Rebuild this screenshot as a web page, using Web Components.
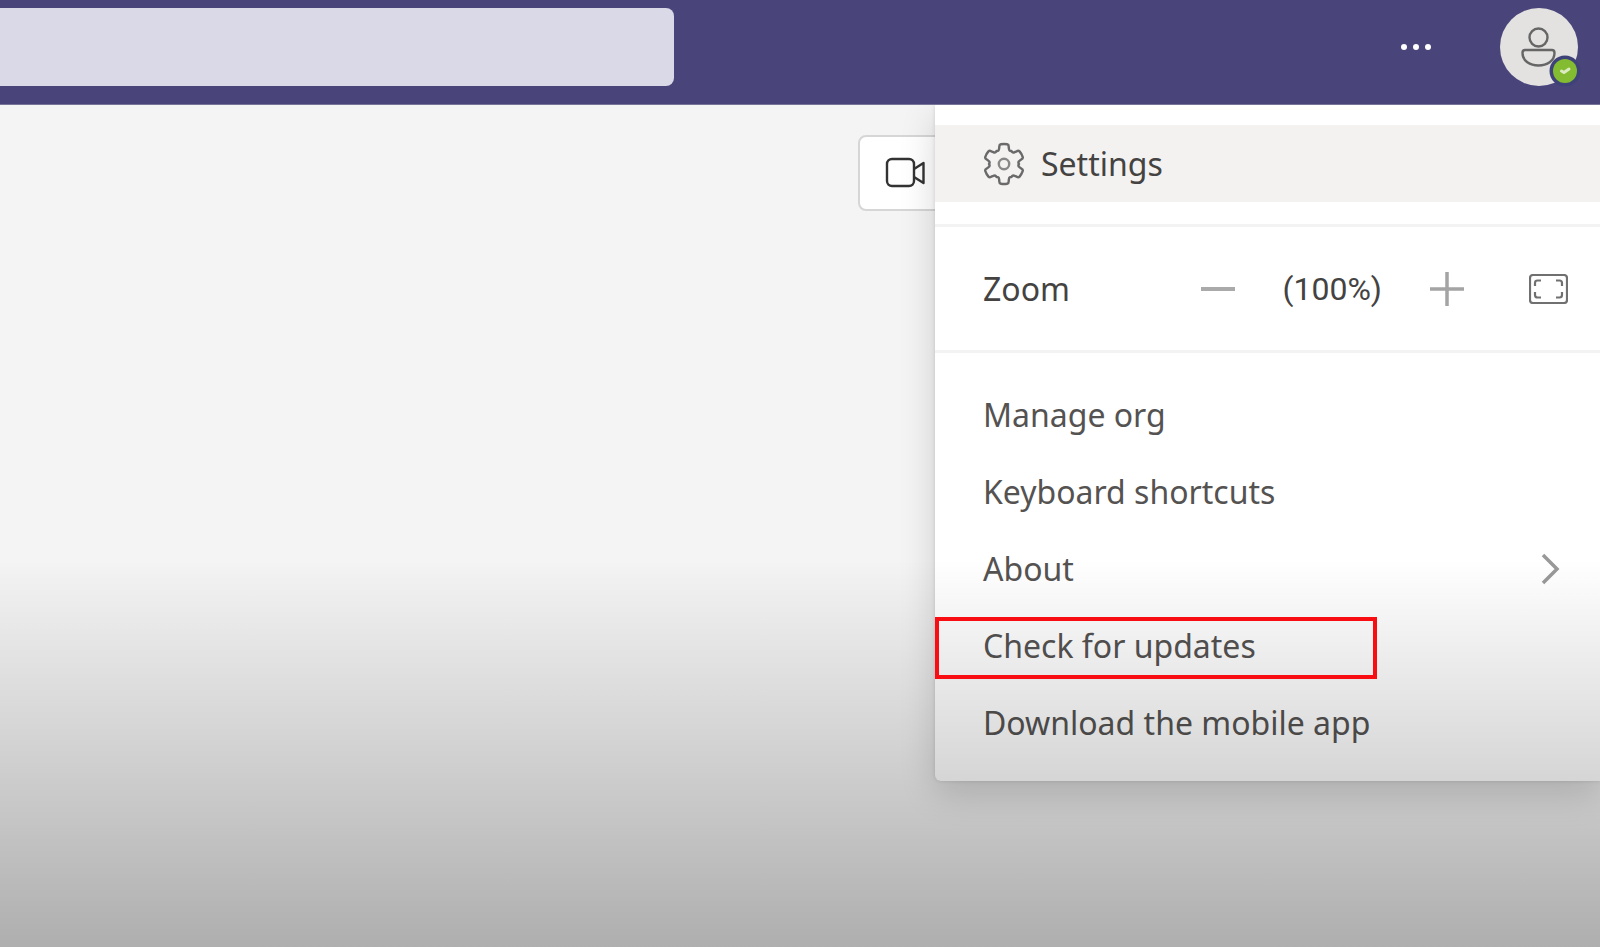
<!DOCTYPE html>
<html lang="en">
<head>
<meta charset="utf-8">
<meta name="viewport" content="width=device-width, initial-scale=1">
<title>Teams</title>
<style>
  html, body { margin: 0; }
  body { font-family: "Noto Sans", "Open Sans", sans-serif; color: #555352; }
</style>
</head>
<body>
<teams-app></teams-app>
<script>
const reset = `
  *, ::before, ::after { box-sizing: border-box; }
  :host { box-sizing: border-box; }
  :host::after { box-sizing: border-box; }
  button { font: inherit; color: inherit; background: none; border: 0; padding: 0; margin: 0; cursor: pointer; text-align: left; }
  svg { display: block; fill: none; }
`;
const define = (name, html) => customElements.define(name, class extends HTMLElement {
  constructor() {
    super();
    this.attachShadow({ mode: 'open' }).innerHTML = html;
  }
});

define('user-avatar', `
  <style>${reset}
    :host { display: block; position: relative; }
    button { display: grid; place-items: center; width: 78px; height: 78px; border-radius: 50%; background: #e3e2e1; }
    .status { position: absolute; right: -3px; bottom: -1px; }
  </style>
  <button aria-label="Profile">
    <svg width="40" height="44" viewBox="0 0 40 44" stroke="#666" stroke-width="2.400">
      <circle cx="19.500" cy="12.500" r="9"/>
      <path d="M6 25H33Q35.500 25 35.500 28C35.500 36 28 40.500 19.500 40.500S3.500 36 3.500 28Q3.500 25 6 25Z"/>
    </svg>
  </button>
  <svg class="status" width="32" height="32" viewBox="0 0 32 32">
    <circle cx="16" cy="16" r="15.500" fill="#3f4279"/>
    <circle cx="16" cy="16" r="12" fill="#83bb31"/>
    <path d="M12.500 16l2.500 1.500 5-3.500" stroke="#dcecc0" stroke-width="3" stroke-linecap="round" stroke-linejoin="round"/>
  </svg>
`);

define('title-bar', `
  <style>${reset}
    :host { display: flex; align-items: center; height: 105px; padding: 0 22px 10px 0; background: #49457b; border-bottom: 1px solid #77749b; position: relative; z-index: 1; }
    input { flex: 1; min-width: 0; height: 78px; border: 0; border-radius: 0 8px 8px 0; background: #dad9e7; font: inherit; font-size: 32px; padding: 0 24px; outline: 0; }
    .actions { display: flex; align-items: center; gap: 66px; margin-left: 724px; }
    .dots { fill: #fff; }
  </style>
  <input type="search" aria-label="Search">
  <div class="actions">
    <button aria-label="Settings and more">
      <svg class="dots" width="36" height="36" viewBox="0 0 36 36"><circle cx="6" cy="18" r="3"/><circle cx="18" cy="18" r="3"/><circle cx="30" cy="18" r="3"/></svg>
    </button>
    <user-avatar></user-avatar>
  </div>
`);

customElements.define('gear-icon', class extends HTMLElement {
  constructor() {
    super();
    const point = (radius, degrees) => {
      const a = degrees * Math.PI / 180;
      return (22 + radius * Math.sin(a)).toFixed(2) + ' ' + (22 - radius * Math.cos(a)).toFixed(2);
    };
    let d = '';
    for (let t = 0; t < 360; t += 60) {
      d += (t ? 'L' : 'M') + point(18, t - 15) + 'Q' + point(20, t - 14) + ' ' + point(20, t - 9)
        + 'Q' + point(20.4, t) + ' ' + point(20, t + 9)
        + 'Q' + point(20, t + 14) + ' ' + point(18, t + 15)
        + 'L' + point(16, t + 18) + 'Q' + point(13.6, t + 22) + ' ' + point(15, t + 30)
        + 'Q' + point(13.6, t + 38) + ' ' + point(16, t + 42);
    }
    this.attachShadow({ mode: 'open' }).innerHTML = `
      <style>${reset} :host { display: block; }</style>
      <svg width="44" height="44" viewBox="0 0 44 44" stroke="#6a6a6a" stroke-width="2.400" stroke-linejoin="round">
        <path d="${d}Z"/><circle cx="22" cy="22" r="5.200" stroke="#888"/>
      </svg>`;
  }
});

define('menu-item', `
  <style>${reset}
    :host { display: block; position: relative; }
    button { display: flex; align-items: center; width: 100%; height: 77px; padding: 0 40px 0 48px; }
    .label { flex: 1; }
    :host([active]) button { background: #f3f2f1; color: #444342; }
    :host([marked])::after { content: ""; position: absolute; z-index: 3; left: 0; top: 10px; width: 442px; height: 62px; border: 4px solid #f80d12; pointer-events: none; }
    ::slotted([slot=icon]) { margin: 0 15px 0 -1px; }
  </style>
  <button role="menuitem"><slot name="icon"></slot><span class="label"><slot></slot></span><slot name="end"></slot></button>
`);

define('zoom-control', `
  <style>${reset}
    :host { display: flex; align-items: center; height: 123px; padding: 0 32px 0 48px; color: #444342; }
    .label { flex: 1; }
    .value { margin: 0 48px; font-family: Roboto, sans-serif; }
    .full { margin-left: 65px; }
  </style>
  <span class="label">Zoom</span>
  <button aria-label="Zoom out"><svg width="34" height="34" viewBox="0 0 34 34" stroke="#aaa" stroke-width="4"><path d="M0 17H34"/></svg></button>
  <span class="value">(100%)</span>
  <button aria-label="Zoom in"><svg width="34" height="34" viewBox="0 0 34 34" stroke="#a4a4a4" stroke-width="3.500"><path d="M0 17H34M17 0V34"/></svg></button>
  <button class="full" aria-label="Full screen">
    <svg width="39" height="30" viewBox="0 0 39 30" stroke="#707070" stroke-width="2.200">
      <rect x="1" y="1" width="37" height="28" rx="3"/>
      <path d="M6 12V9Q6 6.500 8.500 6.500H12M27 6.500H30.500Q33 6.500 33 9V12M33 18V21Q33 23.500 30.500 23.500H27M12 23.500H8.500Q6 23.500 6 21V18"/>
    </svg>
  </button>
`);

define('settings-menu', `
  <style>${reset}
    :host { display: block; padding: 20px 0; background: #fff; border-radius: 0 0 0 6px; font-size: 32px; line-height: 44px; box-shadow: 0 12px 36px rgba(0,0,0,.16), 0 0 4px rgba(0,0,0,.12); }
    hr { margin: 0; border: 0; height: 3px; background: #f3f3f3; }
    hr.spaced { margin-top: 22px; }
    .links { padding-top: 23px; }
  </style>
  <menu-item active><gear-icon slot="icon"></gear-icon>Settings</menu-item>
  <hr class="spaced">
  <zoom-control></zoom-control>
  <hr>
  <div class="links">
    <menu-item>Manage org</menu-item>
    <menu-item>Keyboard shortcuts</menu-item>
    <menu-item>About
      <svg slot="end" width="20" height="32" viewBox="0 0 20 32" fill="none" stroke="#999" stroke-width="3.500"><path d="M3 2L17 16L3 30"/></svg>
    </menu-item>
    <menu-item marked>Check for updates</menu-item>
    <menu-item>Download the mobile app</menu-item>
  </div>
`);

define('meet-button', `
  <style>${reset}
    :host { display: block; }
    button { display: flex; align-items: center; width: 140px; height: 76px; padding-left: 25px; background: #fff; border: 2px solid #d6d6d6; border-radius: 8px; }
  </style>
  <button aria-label="Meet now">
    <svg width="42" height="32" viewBox="0 0 42 32" stroke="#333" stroke-width="2.400" stroke-linejoin="round">
      <rect x="2" y="2" width="27" height="27" rx="5"/><path d="M29 12L38.500 6V26L29 20"/>
    </svg>
  </button>
`);

define('teams-app', `
  <style>${reset}
    :host { display: flex; flex-direction: column; min-height: 100vh; background: #f4f4f4; position: relative; overflow: hidden; }
    main { flex: 1; position: relative; }
    .toolbar { display: flex; justify-content: flex-end; padding: 30px 602px 0 0; }
    settings-menu { position: absolute; top: 0; right: 0; width: 665px; }
    .shade { position: absolute; z-index: 2; inset: 0; pointer-events: none; background: linear-gradient(transparent 59%, rgba(0,0,0,.285)); }
  </style>
  <title-bar></title-bar>
  <main>
    <div class="toolbar"><meet-button></meet-button></div>
    <settings-menu role="menu"></settings-menu>
  </main>
  <div class="shade"></div>
`);
</script>
</body>
</html>
